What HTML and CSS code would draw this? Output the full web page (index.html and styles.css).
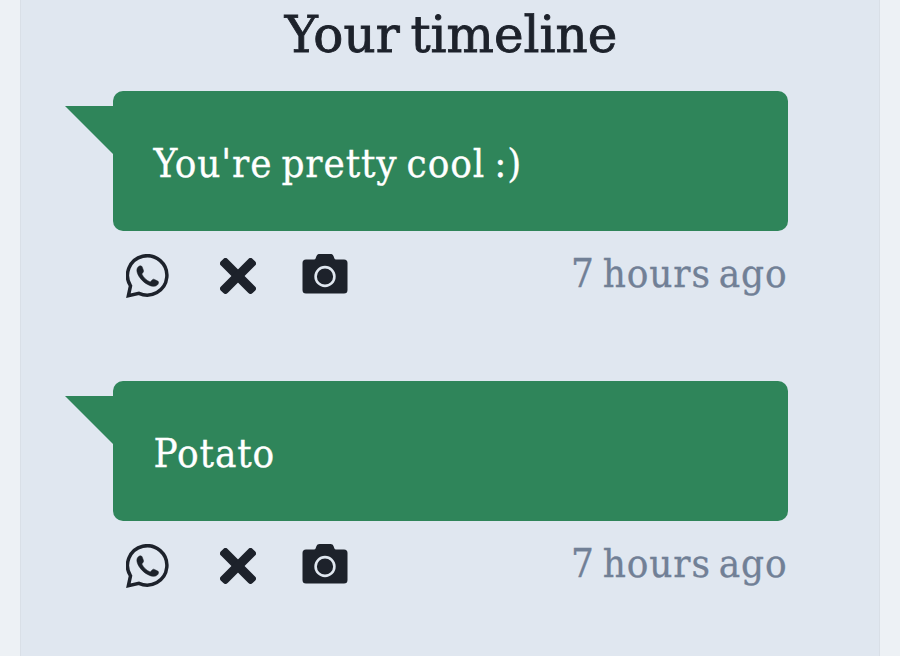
FILE: index.html
```html
<!DOCTYPE html>
<html lang="en">
<head>
    <meta charset="UTF-8">
    <meta name="viewport" content="width=device-width, initial-scale=1.0">
    <title>Your timeline</title>
    <link rel="stylesheet" href="styles.css">
</head>
<body>
    <svg class="symbols" aria-hidden="true">
        <symbol id="whatsapp" viewBox="0 0 44 44">
            <path d="M2.4 41.6 L4.5 31.9 A19.7 19.7 0 1 1 12.9 39.3 Z" fill="none" stroke="currentColor" stroke-width="3.5"/>
            <path d="M12.6 12.5 C13.8 11.5 15.5 11.6 16.1 12.8 L17.5 16.4 C17.8 17.4 17.3 18.2 15.8 19.9 C17.5 23.5 20.2 26.1 24.2 28 L26.4 25.7 C27 25.1 27.6 25 28.4 25.4 L31.8 27.1 C33.1 27.8 32.6 30 31.3 31.1 C28.7 33.2 25.4 32.5 21.5 30.4 C16.6 27.7 12.5 23 11.2 18.4 C10.5 16 10.9 13.8 12.6 12.5 Z" fill="currentColor" stroke="currentColor" stroke-width=".5"/>
        </symbol>
        <symbol id="cross" viewBox="0 0 36 36">
            <rect x="-4.4" y="13.3" width="44.8" height="9.4" rx="3" transform="rotate(45 18 18)" fill="currentColor"/>
            <rect x="-4.4" y="13.3" width="44.8" height="9.4" rx="3" transform="rotate(-45 18 18)" fill="currentColor"/>
        </symbol>
        <symbol id="camera" viewBox="0 0 46 40">
            <path d="M3.5 5.5 H12 Q13.3 5.5 13.7 4.3 L14.3 2.5 C14.9 .8 16 0 17.6 0 H28.5 C30 0 31.2 .8 31.7 2.5 L32.3 4.3 Q32.7 5.5 34 5.5 H42 Q45.5 5.5 45.5 9 V36 Q45.5 39.5 42 39.5 H4 Q.5 39.5 .5 36 V9 Q.5 5.5 4 5.5 Z" fill="currentColor"/>
            <circle class="lens" cx="23" cy="22.5" r="9.4"/>
        </symbol>
    </svg>

    <div class="timeline">
        <h1>Your timeline</h1>
        <div class="post">
            <div class="bubble">You're pretty cool :)</div>
            <div class="post-footer">
                <div class="actions">
                    <svg class="icon-whatsapp"><use href="#whatsapp"/></svg>
                    <svg class="icon-cross"><use href="#cross"/></svg>
                    <svg class="icon-camera"><use href="#camera"/></svg>
                </div>
                <span class="time">7 hours ago</span>
            </div>
        </div>
        <div class="post">
            <div class="bubble">Potato</div>
            <div class="post-footer">
                <div class="actions">
                    <svg class="icon-whatsapp"><use href="#whatsapp"/></svg>
                    <svg class="icon-cross"><use href="#cross"/></svg>
                    <svg class="icon-camera"><use href="#camera"/></svg>
                </div>
                <span class="time">7 hours ago</span>
            </div>
        </div>
    </div>
</body>
</html>
```

FILE: styles.css
```css
* {
    box-sizing: border-box;
}

body {
    margin: 0;
    height: 100vh;
    overflow: hidden;
    background-color: #edf1f5;
    color: #1d222b;
    font-family: "DejaVu Serif Condensed", "DejaVu Serif", serif;
    font-stretch: condensed;
    font-size: 40px;
}

.symbols {
    display: block;
    width: 0;
    height: 0;
}

.timeline {
    height: 100%;
    margin: 0 20px;
    padding: 0 91.5px;
    background-color: #e0e7f0;
    border: solid #d9dfe7;
    border-width: 0 1px;
}

.timeline h1 {
    margin: 0;
    height: 91px;
    padding-left: 2px;
    font-family: "DejaVu Serif", serif;
    font-stretch: normal;
    font-size: 50px;
    font-weight: normal;
    line-height: 70px;
    word-spacing: -5px;
    text-align: center;
    white-space: nowrap;
    -webkit-text-stroke: 0.9px #1d222b;
}

.post {
    height: 290px;
}

.bubble {
    position: relative;
    display: flex;
    align-items: center;
    height: 140px;
    padding: 4px 41px 0;
    background-color: #2f855a;
    border-radius: 10px;
    color: #fff;
    letter-spacing: 0.9px;
    word-spacing: -3.3px;
    white-space: nowrap;
    -webkit-text-stroke: 0.3px #fff;
}

.bubble::before {
    content: "";
    position: absolute;
    top: 15px;
    left: -47.5px;
    border-top: 48px solid #2f855a;
    border-left: 48px solid transparent;
}

.post-footer {
    display: flex;
    justify-content: space-between;
    height: 86px;
    padding-left: 13px;
}

.actions {
    display: flex;
    padding-top: 23px;
}

.actions svg {
    overflow: visible;
}

.icon-whatsapp {
    width: 44px;
    height: 44px;
}

.icon-cross {
    width: 36px;
    height: 36px;
    margin: 4px 0 0 50px;
}

.icon-camera {
    width: 46px;
    height: 40px;
    margin-left: 46px;
}

.lens {
    fill: none;
    stroke: #e0e7f0;
    stroke-width: 2.6;
}

.time {
    color: #718096;
    letter-spacing: 0.9px;
    word-spacing: -4.5px;
    line-height: 85px;
    white-space: nowrap;
    -webkit-text-stroke: 0.3px #718096;
}
```
